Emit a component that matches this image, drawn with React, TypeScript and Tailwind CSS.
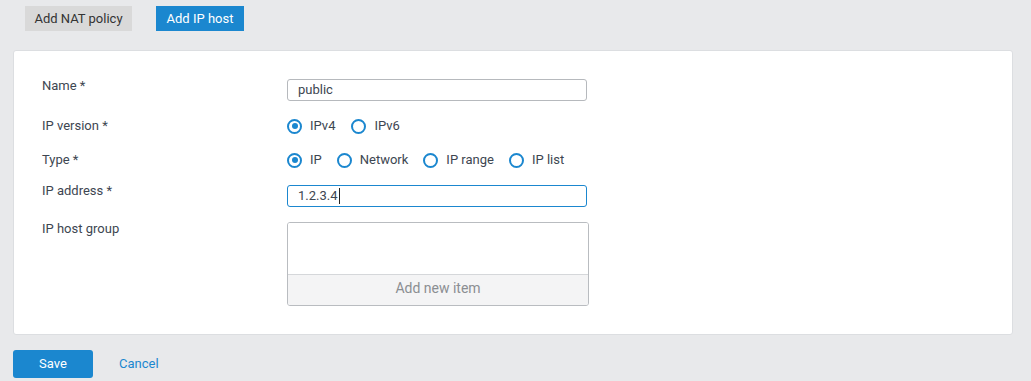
import React from "react";

type RadioProps = {
  label: string;
  checked?: boolean;
};

function Radio({ label, checked }: RadioProps) {
  return (
    <div className="flex items-center gap-[8px]">
      <span className="flex h-[15px] w-[15px] items-center justify-center rounded-full border-2 border-[#1b87cf]">
        {checked && <span className="h-[6px] w-[6px] rounded-full bg-[#1b87cf]" />}
      </span>
      <span className="text-[13px] leading-4 text-[#3d4651]">{label}</span>
    </div>
  );
}

function Label({ children }: { children: React.ReactNode }) {
  return <div className="w-[245px] shrink-0 text-[13px] leading-4 text-[#3d4651]">{children}</div>;
}

export default function App() {
  return (
    <div className="min-h-[381px] w-full bg-[#e8e9eb] font-['Roboto',sans-serif]">
      <div className="flex gap-[24px] pl-[25px] pt-[6px]">
        <button className="h-[25px] w-[107px] bg-[#d9d9d9] text-[13px] text-[#333]">Add NAT policy</button>
        <button className="h-[25px] w-[88px] bg-[#1b87cf] text-[13px] text-white">Add IP host</button>
      </div>

      <div className="mx-[13px] mt-[19px] w-[1000px] rounded-[3px] border border-[#dcdee1] bg-white pb-[28px] pl-[28px] pt-[28px]">
        <div className="flex h-[22px] items-start">
          <div className="-mt-[1px]">
            <Label>Name *</Label>
          </div>
          <div className="flex h-[22px] w-[300px] items-center rounded-[3px] border border-[#b6b9bd] px-[10px] text-[13px] text-[#3d4651]">
            public
          </div>
        </div>

        <div className="mt-[15px] flex h-[20px] items-center">
          <Label>IP version *</Label>
          <div className="flex gap-[16px]">
            <Radio label="IPv4" checked />
            <Radio label="IPv6" />
          </div>
        </div>

        <div className="mt-[14px] flex h-[20px] items-center">
          <Label>Type *</Label>
          <div className="flex gap-[15px]">
            <Radio label="IP" checked />
            <Radio label="Network" />
            <Radio label="IP range" />
            <Radio label="IP list" />
          </div>
        </div>

        <div className="mt-[15px] flex h-[22px] items-start">
          <div className="-mt-[2px]">
            <Label>IP address *</Label>
          </div>
          <div className="flex h-[22px] w-[300px] items-center rounded-[3px] border border-[#1b87cf] px-[10px] text-[13px] text-[#3d4651]">
            1.2.3.4
            <span className="ml-[1px] h-[16px] w-px bg-[#222]" />
          </div>
        </div>

        <div className="mt-[15px] flex items-start">
          <div className="-mt-[1px]">
            <Label>IP host group</Label>
          </div>
          <div className="flex h-[84px] w-[302px] flex-col overflow-hidden rounded-[3px] border border-[#b9bcc0]">
            <div className="h-[51px] bg-white" />
            <div className="flex flex-1 items-center justify-center border-t border-[#d5d7da] bg-[#f4f4f5] pb-[3px] text-[14px] text-[#8b8e92]">
              Add new item
            </div>
          </div>
        </div>
      </div>

      <div className="flex items-center gap-[26px] pl-[13px] pt-[15px]">
        <button className="h-[28px] w-[80px] rounded-[3px] bg-[#1b87cf] text-[13px] text-white">Save</button>
        <span className="text-[13px] text-[#1b87cf]">Cancel</span>
      </div>
    </div>
  );
}
